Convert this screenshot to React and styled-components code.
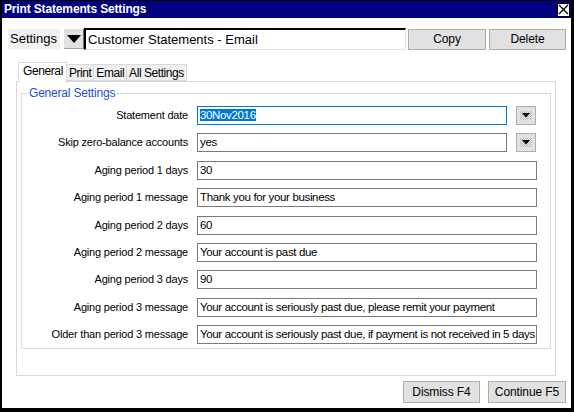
import React from "react";
import styled, { createGlobalStyle, css } from "styled-components";

const Global = createGlobalStyle`
  html, body { margin: 0; padding: 0; background: #fff; }
  * { box-sizing: border-box; }
`;

const FONT = `"Liberation Sans", Arial, sans-serif`;

const Window = styled.div`
  width: 574px;
  height: 412px;
  border-style: solid;
  border-color: #000;
  border-width: 1px 3px 4px 2px;
  background: #fff;
  display: flex;
  flex-direction: column;
  font-family: ${FONT};
  color: #000;
`;

const TitleBar = styled.div`
  height: 17px;
  background: #000080;
  display: flex;
  align-items: center;
  justify-content: space-between;
  padding: 0 1px 0 2px;
`;

const Title = styled.div`
  color: #fff;
  font-weight: bold;
  font-size: 12px;
  letter-spacing: -0.15px;
  line-height: 17px;
`;

const CloseBox = styled.div`
  width: 13px;
  height: 14px;
  background: #fff;
  border: 1px solid #000;
  display: flex;
  align-items: center;
  justify-content: center;
`;

const SettingsRow = styled.div`
  display: flex;
  align-items: center;
  margin-top: 10px;
  padding: 0 5px 0 6px;
  height: 22px;
`;

const SettingsLabel = styled.div`
  width: 52px;
  height: 20px;
  background: #f0f0f0;
  font-size: 13px;
  line-height: 20px;
  padding-left: 2px;
  margin-right: 4px;
`;

const ArrowBtn = styled.div`
  width: 20px;
  height: 20px;
  background: #e1e1e1;
  border-right: 1px solid #6d6d6d;
  border-bottom: 1px solid #a0a0a0;
  display: flex;
  align-items: center;
  justify-content: center;
`;

const NameField = styled.div`
  width: 322px;
  height: 22px;
  border-style: solid;
  border-width: 2px 1px 1px 2px;
  border-color: #000 #e3e3e3 #e3e3e3 #000;
  font-size: 13px;
  line-height: 19px;
  padding-left: 2px;
  margin-right: 2px;
  white-space: nowrap;
`;

const Button = styled.div`
  width: ${(p) => p.$w}px;
  height: ${(p) => p.$h || 21}px;
  background: #e1e1e1;
  border: 1px solid #adadad;
  font-size: 12px;
  display: flex;
  align-items: center;
  justify-content: center;
  margin-left: ${(p) => p.$ml || 0}px;
  letter-spacing: -0.1px;
`;

const TabStrip = styled.div`
  display: flex;
  align-items: flex-end;
  margin-top: 12px;
  padding-left: 16px;
  height: 19px;
  position: relative;
  z-index: 1;
`;

const Tab = styled.div`
  height: 17px;
  background: #f0f0f0;
  border: 1px solid #d9d9d9;
  border-left: none;
  font-size: 12px;
  letter-spacing: -0.45px;
  line-height: 16px;
  padding: 0 2px;
  ${(p) =>
    p.$active &&
    css`
      height: 20px;
      background: #fff;
      border-left: 1px solid #d9d9d9;
      border-bottom: none;
      margin-bottom: -1px;
      line-height: 17px;
      padding: 0 3px 0 4px;
      font-size: 12px;
      letter-spacing: -0.4px;
    `}
`;

const Panel = styled.div`
  margin: 0 15px 0 14px;
  height: 295px;
  border: 1px solid #d9d9d9;
  background: #fff;
  padding: 4px 4px 0 4px;
`;

const Group = styled.fieldset`
  margin: 0;
  padding: 6px 0 0 0;
  height: 263px;
  border: 1px solid #dcdcdc;
  min-width: 0;
`;

const Legend = styled.legend`
  color: #1e4fdc;
  font-size: 12px;
  line-height: 14px;
  padding: 0 1px;
  margin-left: 6px;
  letter-spacing: -0.2px;
`;

const Rows = styled.div`
  display: grid;
  grid-template-columns: 166px 340px;
  column-gap: 9px;
  row-gap: 8.4px;
  grid-auto-rows: 19px;
`;

const Label = styled.div`
  font-size: 11px;
  text-align: right;
  line-height: 19px;
  white-space: nowrap;
  letter-spacing: -0.2px;
`;

const ValueCell = styled.div`
  display: flex;
  align-items: center;
`;

const Input = styled.div`
  height: 19px;
  width: ${(p) => (p.$short ? 310 : 340)}px;
  border: 1px solid ${(p) => (p.$focus ? "#0078d7" : "#7a7a7a")};
  font-size: 11.5px;
  line-height: 17px;
  padding-left: 2px;
  white-space: nowrap;
  overflow: hidden;
  letter-spacing: -0.35px;
`;

const Selected = styled.span`
  background: #0078d7;
  color: #fff;
`;

const DropBtn = styled.div`
  width: 20px;
  height: 19px;
  margin-left: 9px;
  border: 1px solid #adadad;
  background: #e1e1e1;
  display: flex;
  align-items: center;
  justify-content: center;
`;

const Stipple = styled.div`
  width: 12px;
  height: 9px;
  background: repeating-conic-gradient(#bdbdbd 0 25%, #e8e8e8 0 50%) 0 0 / 2px 2px;
  display: flex;
  align-items: center;
  justify-content: center;
`;

const Footer = styled.div`
  display: flex;
  justify-content: flex-end;
  gap: 8px;
  margin-top: 5px;
  padding-right: 5px;
`;

const Tri = ({ w = 14, h = 8 }) => (
  <svg width={w} height={h} viewBox={`0 0 ${w} ${h}`}>
    <polygon points={`0,0 ${w},0 ${w / 2},${h}`} fill="#000" />
  </svg>
);

const SmallArrow = () => (
  <svg width="8" height="5" viewBox="0 0 8 5">
    <polygon points="0,0 8,0 4,4.5" fill="#000" />
    <rect x="3" y="0" width="2" height="1" fill="#000" />
  </svg>
);

const rows = [
  { label: "Statement date", value: "30Nov2016", drop: true, focus: true },
  { label: "Skip zero-balance accounts", value: "yes", drop: true },
  { label: "Aging period 1 days", value: "30" },
  { label: "Aging period 1 message", value: "Thank you for your business" },
  { label: "Aging period 2 days", value: "60" },
  { label: "Aging period 2 message", value: "Your account is past due" },
  { label: "Aging period 3 days", value: "90" },
  {
    label: "Aging period 3 message",
    value: "Your account is seriously past due, please remit your payment",
  },
  {
    label: "Older than period 3 message",
    value:
      "Your account is seriously past due, if payment is not received in 5 days",
  },
];

export default function App() {
  return (
    <>
      <Global />
      <Window>
        <TitleBar>
          <Title>Print Statements Settings</Title>
          <CloseBox>
            <svg width="11" height="11" viewBox="0 0 11 11">
              <path d="M1 1 L10 10 M10 1 L1 10" stroke="#000" strokeWidth="1.3" />
            </svg>
          </CloseBox>
        </TitleBar>

        <SettingsRow>
          <SettingsLabel>Settings</SettingsLabel>
          <ArrowBtn>
            <Tri w={14} h={8} />
          </ArrowBtn>
          <NameField>Customer Statements - Email</NameField>
          <Button $w={78}>Copy</Button>
          <Button $w={77} $ml={3}>
            Delete
          </Button>
        </SettingsRow>

        <TabStrip>
          <Tab $active>General</Tab>
          <Tab>Print</Tab>
          <Tab>Email</Tab>
          <Tab>All Settings</Tab>
        </TabStrip>

        <Panel>
          <Group>
            <Legend>General Settings</Legend>
            <Rows>
              {rows.map((r) => (
                <React.Fragment key={r.label}>
                  <Label>{r.label}</Label>
                  <ValueCell>
                    <Input $short={r.drop} $focus={r.focus}>
                      {r.focus ? <Selected>{r.value}</Selected> : r.value}
                    </Input>
                    {r.drop && (
                      <DropBtn>
                        <Stipple>
                          <SmallArrow />
                        </Stipple>
                      </DropBtn>
                    )}
                  </ValueCell>
                </React.Fragment>
              ))}
            </Rows>
          </Group>
        </Panel>

        <Footer>
          <Button $w={77} $h={22}>
            Dismiss F4
          </Button>
          <Button $w={78} $h={22}>
            Continue F5
          </Button>
        </Footer>
      </Window>
    </>
  );
}
